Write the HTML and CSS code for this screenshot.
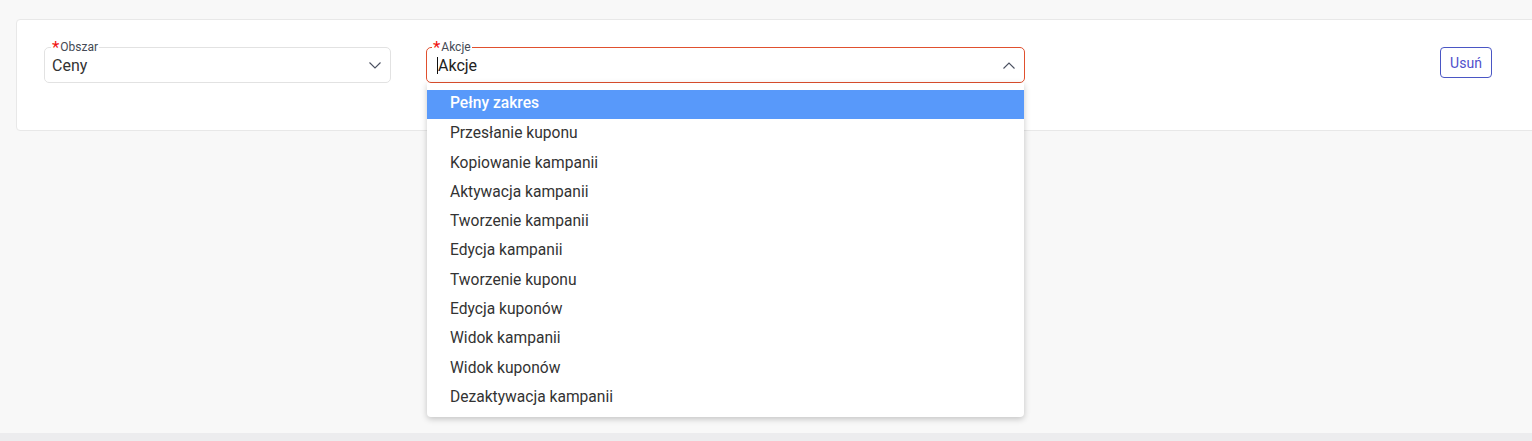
FILE: index.html
```html
<!DOCTYPE html>
<html lang="pl">
<head>
<meta charset="utf-8">
<title>Uprawnienia</title>
<link rel="stylesheet" href="styles.css">
</head>
<body>
<div class="page">
  <div class="card">
    <div class="fields">
      <div class="field field-area">
        <fieldset class="box">
          <legend><span class="req">*</span>Obszar</legend>
          <div class="value">Ceny</div>
          <svg class="chev" width="12" height="7" viewBox="0 0 12 7"><path d="M0.5 0.5 L6 6 L11.5 0.5" fill="none" stroke="#4a5060" stroke-width="1.1"/></svg>
        </fieldset>
      </div>
      <div class="field field-actions">
        <fieldset class="box box-active">
          <legend><span class="req">*</span>Akcje</legend>
          <div class="value value-dark"><span class="caret"></span>Akcje</div>
          <svg class="chev" width="12" height="7" viewBox="0 0 12 7"><path d="M0.5 6.5 L6 1 L11.5 6.5" fill="none" stroke="#4a5060" stroke-width="1.1"/></svg>
        </fieldset>
        <ul class="menu">
          <li class="item active">Pełny zakres</li>
          <li class="item">Przesłanie kuponu</li>
          <li class="item">Kopiowanie kampanii</li>
          <li class="item">Aktywacja kampanii</li>
          <li class="item">Tworzenie kampanii</li>
          <li class="item">Edycja kampanii</li>
          <li class="item">Tworzenie kuponu</li>
          <li class="item">Edycja kuponów</li>
          <li class="item">Widok kampanii</li>
          <li class="item">Widok kuponów</li>
          <li class="item">Dezaktywacja kampanii</li>
        </ul>
      </div>
    </div>
    <button class="btn-remove">Usuń</button>
  </div>
  <div class="bottom-bar"></div>
</div>
</body>
</html>
```
FILE: styles.css
```css
html, body {
  margin: 0;
  padding: 0;
  overflow: hidden;
}
body {
  background: #f8f8f8;
  font-family: Roboto, "Liberation Sans", Arial, sans-serif;
  color: #333;
}
.page {
  height: 441px;
  display: flex;
  flex-direction: column;
}
.card {
  margin: 19px -12px 0 16px;
  background: #fff;
  border: 1px solid #e8e8e8;
  border-radius: 4px;
  padding: 21px 51px 47px 27px;
  display: flex;
  justify-content: space-between;
  align-items: flex-start;
}
.fields {
  display: flex;
  gap: 35px;
}
.field {
  position: relative;
}
.field-area { width: 347px; }
.field-actions { width: 599px; }
.box {
  margin: 0;
  height: 42px;
  box-sizing: border-box;
  border: 1px solid #e2e2e2;
  border-radius: 5px;
  padding: 0 9px 0 7px;
  display: flex;
  align-items: center;
  justify-content: space-between;
}
.box-active {
  border-color: #e0502e;
}
legend {
  font-size: 12px;
  line-height: 12px;
  padding: 0 1px;
  margin-left: -1px;
  color: #444a55;
}
.box-active legend {
  margin-left: -2px;
}
.req {
  color: #f01010;
  font-size: 17px;
  line-height: 0;
  position: relative;
  top: 2px;
  margin-right: 1px;
}
.value {
  font-size: 16px;
  color: #333;
  padding-top: 1px;
  margin-top: -5px;
}
.value-dark {
  color: #222;
  display: flex;
  align-items: center;
  margin-left: 3px;
}
.caret {
  display: inline-block;
  width: 1px;
  height: 17px;
  background: #111;
}
.chev {
  margin-top: -5px;
  display: block;
}
.menu {
  position: absolute;
  left: 1px;
  right: 1px;
  top: 42px;
  margin: 0;
  padding: 7px 0 5px;
  list-style: none;
  background: #fff;
  border-radius: 0 0 4px 4px;
  box-shadow: 0 2px 6px rgba(0, 0, 0, 0.22);
}
.item {
  height: 29.3px;
  line-height: 29.3px;
  padding-left: 23px;
  font-size: 15.6px;
  color: #333;
}
.item.active {
  background: #5899fa;
  color: #fff;
  font-weight: 500;
  height: 29px;
  line-height: 27px;
  margin-bottom: 0.3px;
}
.btn-remove {
  margin-top: 6px;
  height: 31px;
  width: 52px;
  background: #fff;
  border: 1px solid #4a56c4;
  border-radius: 4px;
  color: #5050cc;
  font-family: Roboto, "Liberation Sans", Arial, sans-serif;
  font-size: 14px;
  padding: 0;
}
.bottom-bar {
  margin-top: auto;
  height: 8px;
  background: #ececee;
}
```
